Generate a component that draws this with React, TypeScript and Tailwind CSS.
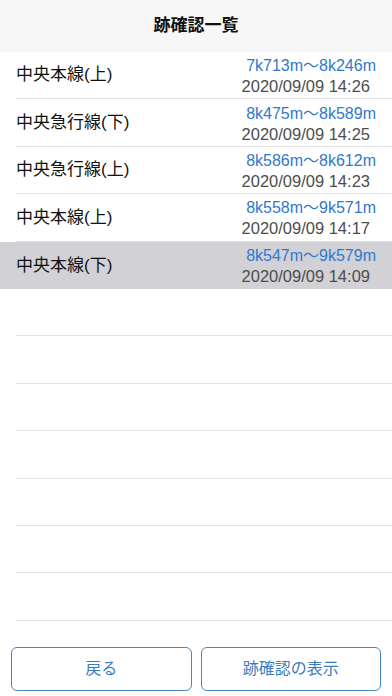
import React from 'react';

interface Record {
  line: string;
  range: string;
  date: string;
}

const records: Record[] = [
  { line: '中央本線(上)', range: '7k713m〜8k246m', date: '2020/09/09 14:26' },
  { line: '中央急行線(下)', range: '8k475m〜8k589m', date: '2020/09/09 14:25' },
  { line: '中央急行線(上)', range: '8k586m〜8k612m', date: '2020/09/09 14:23' },
  { line: '中央本線(上)', range: '8k558m〜9k571m', date: '2020/09/09 14:17' },
  { line: '中央本線(下)', range: '8k547m〜9k579m', date: '2020/09/09 14:09' },
];

const SELECTED = 4;
const EMPTY_ROWS = 7;

const App: React.FC = () => {
  return (
    <div
      className="w-[392px] h-[696px] flex flex-col bg-white overflow-hidden"
      style={{ fontFamily: '"Liberation Sans", "Noto Sans CJK JP", sans-serif' }}
    >
      <header className="h-[52px] shrink-0 bg-[#f7f7f7] flex items-center justify-center">
        <h1 className="text-[17px] font-bold text-[#111]">跡確認一覧</h1>
      </header>

      <div className="flex-1 flex flex-col overflow-hidden">
        {records.map((r, i) => {
          const selected = i === SELECTED;
          return (
            <div
              key={i}
              className={
                selected
                  ? 'h-[47.4px] shrink-0 pl-4 flex bg-[#d1d1d6]'
                  : 'h-[47.4px] shrink-0 pl-4 flex'
              }
            >
              <div
                className={
                  selected
                    ? 'flex-1 flex items-center justify-between pr-4'
                    : 'flex-1 flex items-center justify-between pr-4 border-b border-[#e2e2e4]'
                }
              >
                <span className="text-[17px] text-[#111]">{r.line}</span>
                <div className="flex flex-col items-end leading-[20px] pt-[2px]">
                  <span className="text-[16px] text-[#3079c9]">{r.range}</span>
                  <span className="text-[16.5px] text-[#4d4d4d] pr-[6px]">{r.date}</span>
                </div>
              </div>
            </div>
          );
        })}
        {Array.from({ length: EMPTY_ROWS }).map((_, i) => (
          <div key={`e${i}`} className="h-[47.4px] shrink-0 pl-4 flex">
            <div className="flex-1 border-b border-[#e2e2e4]" />
          </div>
        ))}
      </div>

      <footer className="shrink-0 flex gap-[9px] px-[11px] pt-[26px] pb-[5px]">
        <button className="flex-1 h-[44px] rounded-[6px] border-[1.5px] border-[#4a86c5] text-[16px] text-[#3a7cc0]">
          戻る
        </button>
        <button className="flex-1 h-[44px] rounded-[6px] border-[1.5px] border-[#4a86c5] text-[16px] text-[#3a7cc0]">
          跡確認の表示
        </button>
      </footer>
    </div>
  );
};

export default App;
